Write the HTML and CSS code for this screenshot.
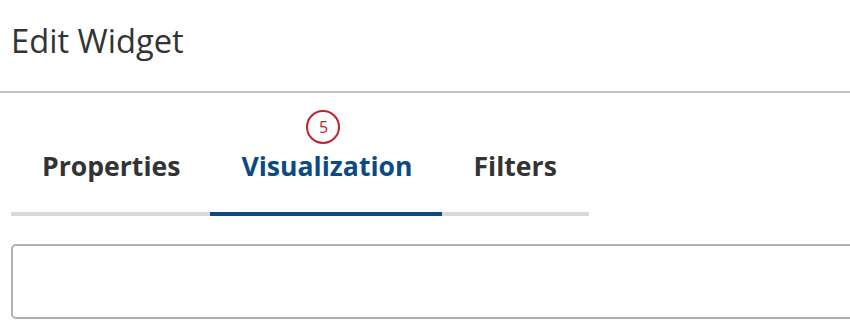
FILE: index.html
```html
<!DOCTYPE html>
<html>
<head>
<meta charset="utf-8">
<link rel="stylesheet" href="styles.css">
</head>
<body>
<div class="page">
  <header class="header">
    <h1 class="title">Edit Widget</h1>
  </header>
  <div class="content">
    <nav class="tabs">
      <div class="tab">Properties</div>
      <div class="tab tab-active">Visualization<span class="badge">5</span></div>
      <div class="tab">Filters</div>
    </nav>
    <div class="field"></div>
  </div>
</div>
</body>
</html>
```
FILE: styles.css
```css
html, body {
  margin: 0;
  padding: 0;
  background: #ffffff;
  font-family: "Open Sans", "Noto Sans", sans-serif;
}
.page {
  width: 850px;
  height: 321px;
  overflow: hidden;
}
.header {
  height: 93px;
  border-bottom: 2px solid #c2c2c2;
  box-sizing: border-box;
  padding: 19px 0 0 11px;
}
.title {
  margin: 0;
  font-size: 32.7px;
  font-weight: 400;
  color: #333333;
  line-height: 44px;
}
.content {
  padding: 0 0 0 11px;
}
.tabs {
  display: flex;
  width: 578px;
  margin-top: 53px;
  border-bottom: 4px solid #d9d9d9;
}
.tab {
  position: relative;
  padding: 0 30px 26px 31px;
  font-size: 26.6px;
  font-weight: 700;
  color: #333333;
  line-height: 40px;
  margin-bottom: -4px;
  border-bottom: 4px solid transparent;
}
.tab-active {
  color: #0d4a84;
  border-bottom-color: #0d4a84;
}
.badge {
  position: absolute;
  left: 96px;
  top: -36px;
  width: 30px;
  height: 30px;
  border: 2.5px solid #c3202f;
  border-radius: 50%;
  color: #c3202f;
  font-size: 16px;
  font-weight: 400;
  line-height: 30px;
  text-align: center;
}
.field {
  margin-top: 28px;
  height: 75px;
  width: 860px;
  border: 2px solid #b0b0b0;
  border-radius: 5px;
  box-sizing: border-box;
}
```
